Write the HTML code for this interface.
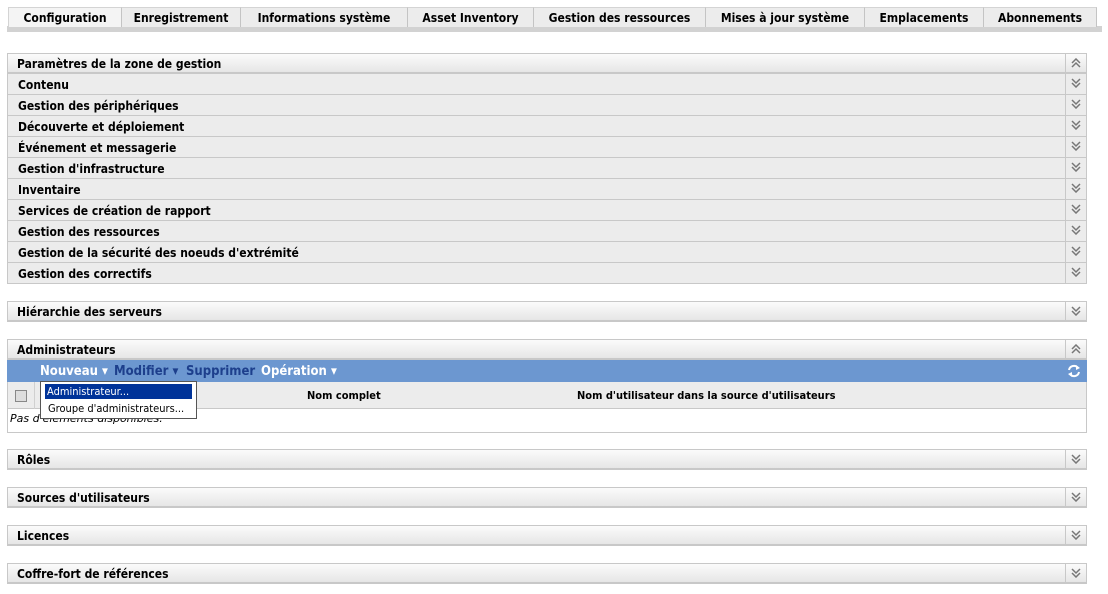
<html><head><style>
body{margin:0;width:1108px;height:594px;background:#fff;font-family:"DejaVu Sans Condensed","DejaVu Sans",sans-serif;font-size:12px;color:#000;position:relative;overflow:hidden}
.a{position:absolute}
.tab{position:absolute;top:7px;height:20px;line-height:21px;text-align:center;font-weight:bold;background:#ececec;border-right:1px solid #c4c4c4;border-top:1px solid #d4d4d4;box-sizing:border-box}
.row{position:absolute;left:7px;width:1080px;height:21px;line-height:23px;background:#ececec;border:1px solid #c8c8c8;border-top:none;box-sizing:border-box;font-weight:bold;padding-left:10px}
.hd{position:absolute;left:7px;width:1080px;height:21px;line-height:21px;background:linear-gradient(#fbfbfb,#e6e6e6);border:1px solid #c8c8c8;border-bottom:2px solid #c8c8c8;box-sizing:border-box;font-weight:bold;padding-left:9px}
.ic{position:absolute;right:0;top:0;width:20px;height:100%;border-left:1px solid #c8c8c8}
.ic svg{position:absolute;left:5px;top:4px}
</style></head><body>
<svg width="0" height="0" style="position:absolute"><defs>
<g id="dn"><path d="M1 1L5 5L9 1M1 5L5 9L9 5" fill="none" stroke="#777" stroke-width="1.5"/></g>
<g id="up"><path d="M1 5L5 1L9 5M1 9L5 5L9 9" fill="none" stroke="#777" stroke-width="1.5"/></g>
</defs></svg>
<div class="a" style="left:7px;top:26px;width:1095px;height:6px;background:#d2d2d2"></div>
<div class="tab" style="left:8px;width:114px;background:#f4f4f4;border-left:1px solid #d4d4d4">Configuration</div>
<div class="tab" style="left:122px;width:119px">Enregistrement</div>
<div class="tab" style="left:241px;width:167px">Informations système</div>
<div class="tab" style="left:408px;width:126px">Asset Inventory</div>
<div class="tab" style="left:534px;width:172px">Gestion des ressources</div>
<div class="tab" style="left:706px;width:159px">Mises à jour système</div>
<div class="tab" style="left:865px;width:119px">Emplacements</div>
<div class="tab" style="left:984px;width:113px">Abonnements</div>

<div class="hd" style="top:53px">Paramètres de la zone de gestion<div class="ic"><svg width="10" height="10"><use href="#up"/></svg></div></div>
<div class="row" style="top:74px">Contenu<div class="ic"><svg width="10" height="10"><use href="#dn"/></svg></div></div>
<div class="row" style="top:95px">Gestion des périphériques<div class="ic"><svg width="10" height="10"><use href="#dn"/></svg></div></div>
<div class="row" style="top:116px">Découverte et déploiement<div class="ic"><svg width="10" height="10"><use href="#dn"/></svg></div></div>
<div class="row" style="top:137px">Événement et messagerie<div class="ic"><svg width="10" height="10"><use href="#dn"/></svg></div></div>
<div class="row" style="top:158px">Gestion d'infrastructure<div class="ic"><svg width="10" height="10"><use href="#dn"/></svg></div></div>
<div class="row" style="top:179px">Inventaire<div class="ic"><svg width="10" height="10"><use href="#dn"/></svg></div></div>
<div class="row" style="top:200px">Services de création de rapport<div class="ic"><svg width="10" height="10"><use href="#dn"/></svg></div></div>
<div class="row" style="top:221px">Gestion des ressources<div class="ic"><svg width="10" height="10"><use href="#dn"/></svg></div></div>
<div class="row" style="top:242px">Gestion de la sécurité des noeuds d'extrémité<div class="ic"><svg width="10" height="10"><use href="#dn"/></svg></div></div>
<div class="row" style="top:263px">Gestion des correctifs<div class="ic"><svg width="10" height="10"><use href="#dn"/></svg></div></div>

<div class="hd" style="top:301px">Hiérarchie des serveurs<div class="ic"><svg width="10" height="10"><use href="#dn"/></svg></div></div>

<div class="hd" style="top:339px">Administrateurs<div class="ic"><svg width="10" height="10"><use href="#up"/></svg></div></div>
<div class="a" style="left:7px;top:360px;width:1080px;height:22px;background:#6c97d0;font-weight:bold;font-size:13px;line-height:23px">
<span class="a" style="left:33px;color:#fff">Nouveau ▾</span>
<span class="a" style="left:107px;color:#1d3f8c">Modifier ▾</span>
<span class="a" style="left:179px;color:#1d3f8c">Supprimer</span>
<span class="a" style="left:254px;color:#fff">Opération ▾</span>
<svg class="a" style="right:6px;top:4px" width="14" height="14" viewBox="0 0 14 14"><path d="M2 6A5 5 0 0 1 11 4M12 8A5 5 0 0 1 3 10" fill="none" stroke="#fff" stroke-width="2"/><path d="M9 1L13 4L9 6Z M5 8L1 10L5 13Z" fill="#fff"/></svg>
</div>
<div class="a" style="left:7px;top:382px;width:1080px;height:27px;background:#ececec;border:1px solid #c8c8c8;border-top:none;box-sizing:border-box;font-weight:bold;font-size:11px;line-height:27px">
<div class="a" style="left:7px;top:8px;width:10px;height:10px;border:1px solid #888;background:#ddd"></div>
<div class="a" style="left:26px;top:0;height:27px;border-left:1px solid #d0d0d0"></div>
<span class="a" style="left:299px">Nom complet</span>
<span class="a" style="left:569px">Nom d'utilisateur dans la source d'utilisateurs</span>
</div>
<div class="a" style="left:7px;top:409px;width:1080px;height:24px;border:1px solid #c8c8c8;border-top:none;box-sizing:border-box;font-family:'DejaVu Sans',sans-serif;font-style:italic;font-size:11px;line-height:20px;padding-left:2px">Pas d'éléments disponibles.</div>
<div class="a" style="left:40px;top:381px;width:157px;height:38px;background:#fff;border:1px solid #555;box-sizing:border-box;font-family:'DejaVu Sans Condensed','DejaVu Sans',sans-serif;font-size:11px;white-space:nowrap">
<div class="a" style="left:4px;top:2px;width:147px;height:15px;background:#003399;color:#fff;line-height:15px;padding-left:2px;box-sizing:border-box">Administrateur...</div>
<div class="a" style="left:7px;top:19px;line-height:15px">Groupe d'administrateurs...</div>
</div>

<div class="hd" style="top:449px">Rôles<div class="ic"><svg width="10" height="10"><use href="#dn"/></svg></div></div>
<div class="hd" style="top:487px">Sources d'utilisateurs<div class="ic"><svg width="10" height="10"><use href="#dn"/></svg></div></div>
<div class="hd" style="top:525px">Licences<div class="ic"><svg width="10" height="10"><use href="#dn"/></svg></div></div>
<div class="hd" style="top:563px">Coffre-fort de références<div class="ic"><svg width="10" height="10"><use href="#dn"/></svg></div></div>
</body></html>
